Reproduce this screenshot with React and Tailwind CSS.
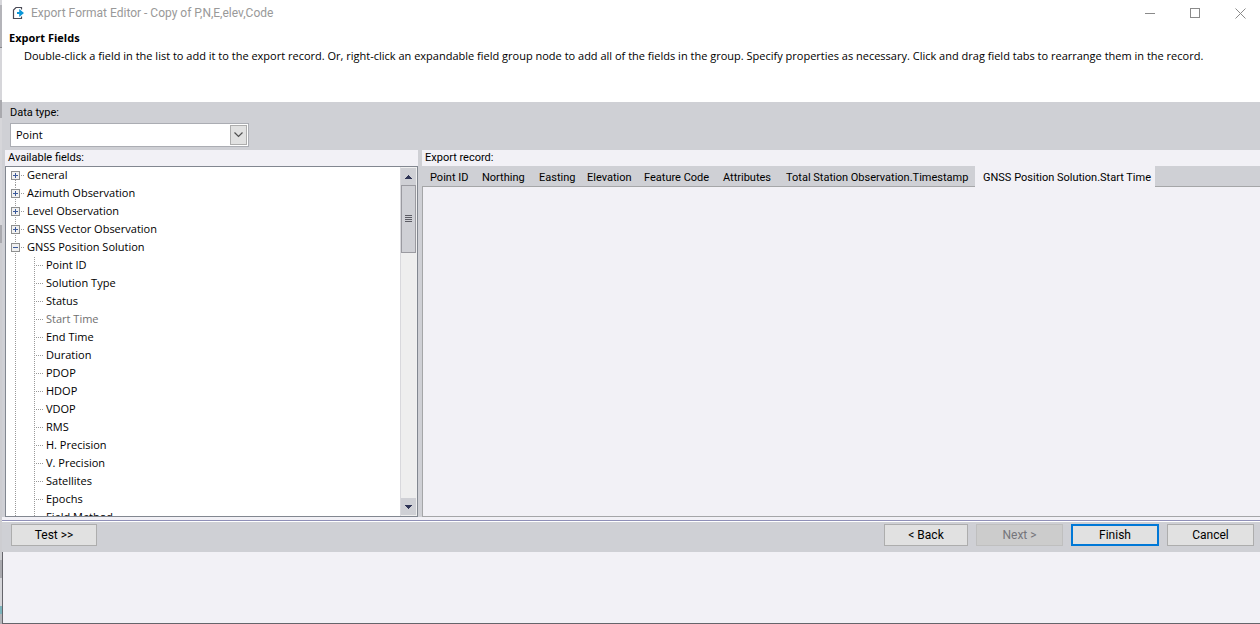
import React, { useState } from "react";

const groups = [
  "General",
  "Azimuth Observation",
  "Level Observation",
  "GNSS Vector Observation",
  "GNSS Position Solution",
];

const fields = [
  "Point ID",
  "Solution Type",
  "Status",
  "Start Time",
  "End Time",
  "Duration",
  "PDOP",
  "HDOP",
  "VDOP",
  "RMS",
  "H. Precision",
  "V. Precision",
  "Satellites",
  "Epochs",
  "Field Method",
];

const tabs = [
  { name: "Point ID", width: "w-[52px]" },
  { name: "Northing", width: "w-[57px]" },
  { name: "Easting", width: "w-[48px]" },
  { name: "Elevation", width: "w-[57px]" },
  { name: "Feature Code", width: "w-[79px]" },
  { name: "Attributes", width: "w-[63px]" },
  { name: "Total Station Observation.Timestamp", width: "w-[197px]" },
  { name: "GNSS Position Solution.Start Time", width: "w-[180px]" },
];

function Expander({ open, first }) {
  return (
    <svg width="21" height="18" viewBox="0 0 21 18" shapeRendering="crispEdges" className="shrink-0" aria-hidden="true">
      <path d={first ? "M9.5 13V18" : "M9.5 0V18"} stroke="#9a9a9a" strokeDasharray="1 1" />
      <path d="M15 8.5H19" stroke="#9a9a9a" strokeDasharray="1 1" />
      <rect x="5.5" y="4.5" width="8" height="8" fill="#f1f1f1" stroke="#8e8f8f" />
      <path d="M7 8.5H12" stroke="#3c5a9a" />
      {!open && <path d="M9.5 6V11" stroke="#3c5a9a" />}
    </svg>
  );
}

function Branch() {
  return (
    <svg width="40" height="18" viewBox="0 0 40 18" shapeRendering="crispEdges" className="shrink-0" aria-hidden="true">
      <path d="M9.5 0V18M28.5 0V18M30 8.5H38" stroke="#9a9a9a" strokeDasharray="1 1" />
    </svg>
  );
}

function Chevron({ up }) {
  return (
    <svg width="7" height="4" viewBox="0 0 7 4" shapeRendering="crispEdges" aria-hidden="true">
      <path d={up ? "M3 0h1v1h1v1h1v1h1v1H0V3h1V2h1V1h1z" : "M0 0h7v1H6v1H5v1H4v1H3V3H2V2H1V1H0z"} fill="#2f3556" />
    </svg>
  );
}

function DialogButton({ className, ...props }) {
  return (
    <button
      type="button"
      className={
        "h-[22px] border text-center leading-4 " +
        "font-['Roboto',sans-serif] text-[12px] " +
        className
      }
      {...props}
    />
  );
}

export default function App() {
  const [active, setActive] = useState(7);
  return (
    <div className="flex h-screen font-['Open_Sans',sans-serif] text-[11px] leading-4 text-black">
      <div className="flex w-0.5 shrink-0 flex-col bg-[#d6d6da]" aria-hidden="true">
        <div className="h-[5px]" />
        <div className="h-[42px] bg-[#b4b4b9]" />
        <div className="h-px bg-[#88888c]" />
        <div className="h-[52px]" />
        <div className="h-[18px] bg-[#a9a9ae]" />
        <div className="h-[107px]" />
        <div className="h-[18px] bg-[#a9a9ae]" />
        <div className="h-[317px] bg-[#cdcdd1]" />
        <div className="h-[18px] bg-[#a9a9ae]" />
        <div className="h-[28px]" />
        <div className="h-[8px] bg-[#7db4bc]" />
        <div className="flex-1 bg-[#b4b4b9]" />
      </div>
      <div className="flex min-w-0 flex-1 flex-col bg-[#f2f1f6]">
        <header className="h-[102px] shrink-0 bg-white">
          <div className="flex h-[26px] items-center pl-2.5 text-[12px] text-[#999999]">
            <svg width="13" height="14" viewBox="0 0 13 14" className="mr-1.5 shrink-0" fill="none" aria-hidden="true">
              <path d="M9.5 3.5V1.5H4L1.5 4V12.5H9.5V10.5" stroke="#4a4a55" strokeWidth="1.2" />
              <path d="M5 6H7.2V3L12 7L7.2 11V8H5z" fill="#0a96d8" />
            </svg>
            <h1 className="flex-1 font-['Roboto',sans-serif]">Export Format Editor - Copy of P,N,E,elev,Code</h1>
            <div className="flex gap-[5px]">
              <button type="button" aria-label="Minimize" className="flex w-10 justify-center">
                <svg width="11" height="11" shapeRendering="crispEdges"><path d="M0 5.5H10" stroke="#8a8a8a" /></svg>
              </button>
              <button type="button" aria-label="Maximize" className="flex w-10 justify-center">
                <svg width="11" height="11" shapeRendering="crispEdges"><path d="M.5 .5H9.5V9.5H.5z" stroke="#8a8a8a" fill="none" /></svg>
              </button>
              <button type="button" aria-label="Close" className="flex w-10 justify-center">
                <svg width="11" height="11"><path d="M.5 .5L10.5 10.5M10.5 .5L.5 10.5" stroke="#8a8a8a" /></svg>
              </button>
            </div>
          </div>
          <h2 className="mt-1 pl-[7px] font-bold">Export Fields</h2>
          <p className="mt-0.5 whitespace-nowrap pl-[22px]">
            Double-click a field in the list to add it to the export record. Or, right-click an expandable field group node to add all of the fields in the group. Specify properties as necessary. Click and drag field tabs to rearrange them in the record.
          </p>
        </header>

        <section className="h-12 shrink-0 bg-[#cfd0d5] pl-2 pt-[3px]">
          <label htmlFor="type" className="block font-['Roboto',sans-serif]">Data type:</label>
          <div className="mt-0.5 grid h-6 w-[239px] border border-[#abadb3] bg-white">
            <select id="type" className="col-start-1 row-start-1 appearance-none bg-transparent pl-[5px] text-[11px] outline-none">
              <option>Point</option>
            </select>
            <span className="pointer-events-none col-start-1 row-start-1 m-px flex w-[17px] items-center justify-center justify-self-end border border-[#adadad] bg-[#e1e1e1]">
              <svg width="9" height="6" viewBox="0 0 9 6" fill="none" aria-hidden="true"><path d="M.5 .5L4.5 4.5L8.5 .5" stroke="#505050" strokeWidth="1.2" /></svg>
            </span>
          </div>
        </section>

        <main className="flex min-h-0 flex-1 bg-[#cfd0d5] pl-[3px]">
          <section className="flex w-[413px] shrink-0 flex-col">
            <h3 className="h-4 shrink-0 bg-[#f2f1f6] pl-[3px] font-['Roboto',sans-serif] leading-4">Available fields:</h3>
            <div className="flex min-h-0 flex-1 border border-[#828790] bg-white">
              <ul className="min-w-0 flex-1 overflow-hidden">
                {groups.map((g, i) => (
                  <li key={g}>
                    <button type="button" className="flex h-[18px] w-full text-left">
                      <Expander open={i === 4} first={i === 0} />
                      <span>{g}</span>
                    </button>
                    {i === 4 && (
                      <ul>
                        {fields.map((f) => (
                          <li key={f}>
                            <button type="button" disabled={f === "Start Time"} className="flex h-[18px] w-full text-left disabled:text-[#707070]">
                              <Branch />
                              <span>{f}</span>
                            </button>
                          </li>
                        ))}
                      </ul>
                    )}
                  </li>
                ))}
              </ul>
              <div className="flex w-[17px] shrink-0 flex-col border-x border-t border-[#f0f0f0] border-l-[#d8d8dc] bg-[#eeeeee]">
                <button type="button" aria-label="Scroll up" className="flex h-[17px] items-center justify-center bg-[#cfd0d5]"><Chevron up /></button>
                <div className="flex h-[68px] items-center justify-center border border-[#9a9aa0] bg-[#cfd0d5]">
                  <svg width="7" height="8" shapeRendering="crispEdges" aria-hidden="true"><path d="M0 .5H7M0 2.5H7M0 4.5H7M0 6.5H7" stroke="#5c5c64" /></svg>
                </div>
                <div className="flex-1" />
                <button type="button" aria-label="Scroll down" className="mb-px flex h-[17px] items-center justify-center bg-[#cfd0d5]"><Chevron /></button>
              </div>
            </div>
          </section>
          <section className="ml-1 flex min-w-0 flex-1 flex-col bg-[#f2f1f6]">
            <h3 className="h-4 shrink-0 pl-[3px] font-['Roboto',sans-serif] leading-4">Export record:</h3>
            <div role="tablist" className="flex h-[21px] shrink-0 bg-[#cfd0d5] font-['Roboto',sans-serif]">
              {tabs.map((t, i) => (
                <button
                  key={t.name}
                  type="button"
                  role="tab"
                  aria-selected={i === active}
                  onClick={() => setActive(i)}
                  className={
                    "shrink-0 whitespace-nowrap border-b pl-2 pt-1 text-left " +
                    t.width +
                    (i === active ? " border-[#f2f1f6] bg-[#f2f1f6]" : " border-[#a5a6a8]")
                  }
                >
                  {t.name}
                </button>
              ))}
              <div className="flex-1 border-b border-[#a5a6a8]" />
            </div>
            <div role="tabpanel" className="flex-1 border-b border-l border-[#a5a6a8]" />
          </section>
        </main>

        <footer className="shrink-0">
          <div className="h-[5px] border-b border-white pt-[3px]"><div className="h-px bg-[#9090b8]" /></div>
          <div className="flex h-[30px] items-start bg-[#cfd0d5] pl-[9px] pr-1.5 pt-0.5">
            <DialogButton className="w-[86px] border-[#adadad] bg-[#e1e1e1]">Test &gt;&gt;</DialogButton>
            <div className="ml-auto flex gap-2">
              <DialogButton className="w-[84px] border-[#adadad] bg-[#e1e1e1]">&lt; Back</DialogButton>
              <DialogButton disabled className="w-[87px] border-[#bfbfbf] bg-[#cccccc] text-[#75757b]">Next &gt;</DialogButton>
              <DialogButton className="w-[88px] border-2 border-[#0078d7] bg-[#e1e1e1]">Finish</DialogButton>
              <DialogButton className="w-[87px] border-[#adadad] bg-[#e1e1e1]">Cancel</DialogButton>
            </div>
          </div>
          <div className="h-[72px] border-b border-l border-[#65656b]" />
        </footer>
      </div>
    </div>
  );
}
